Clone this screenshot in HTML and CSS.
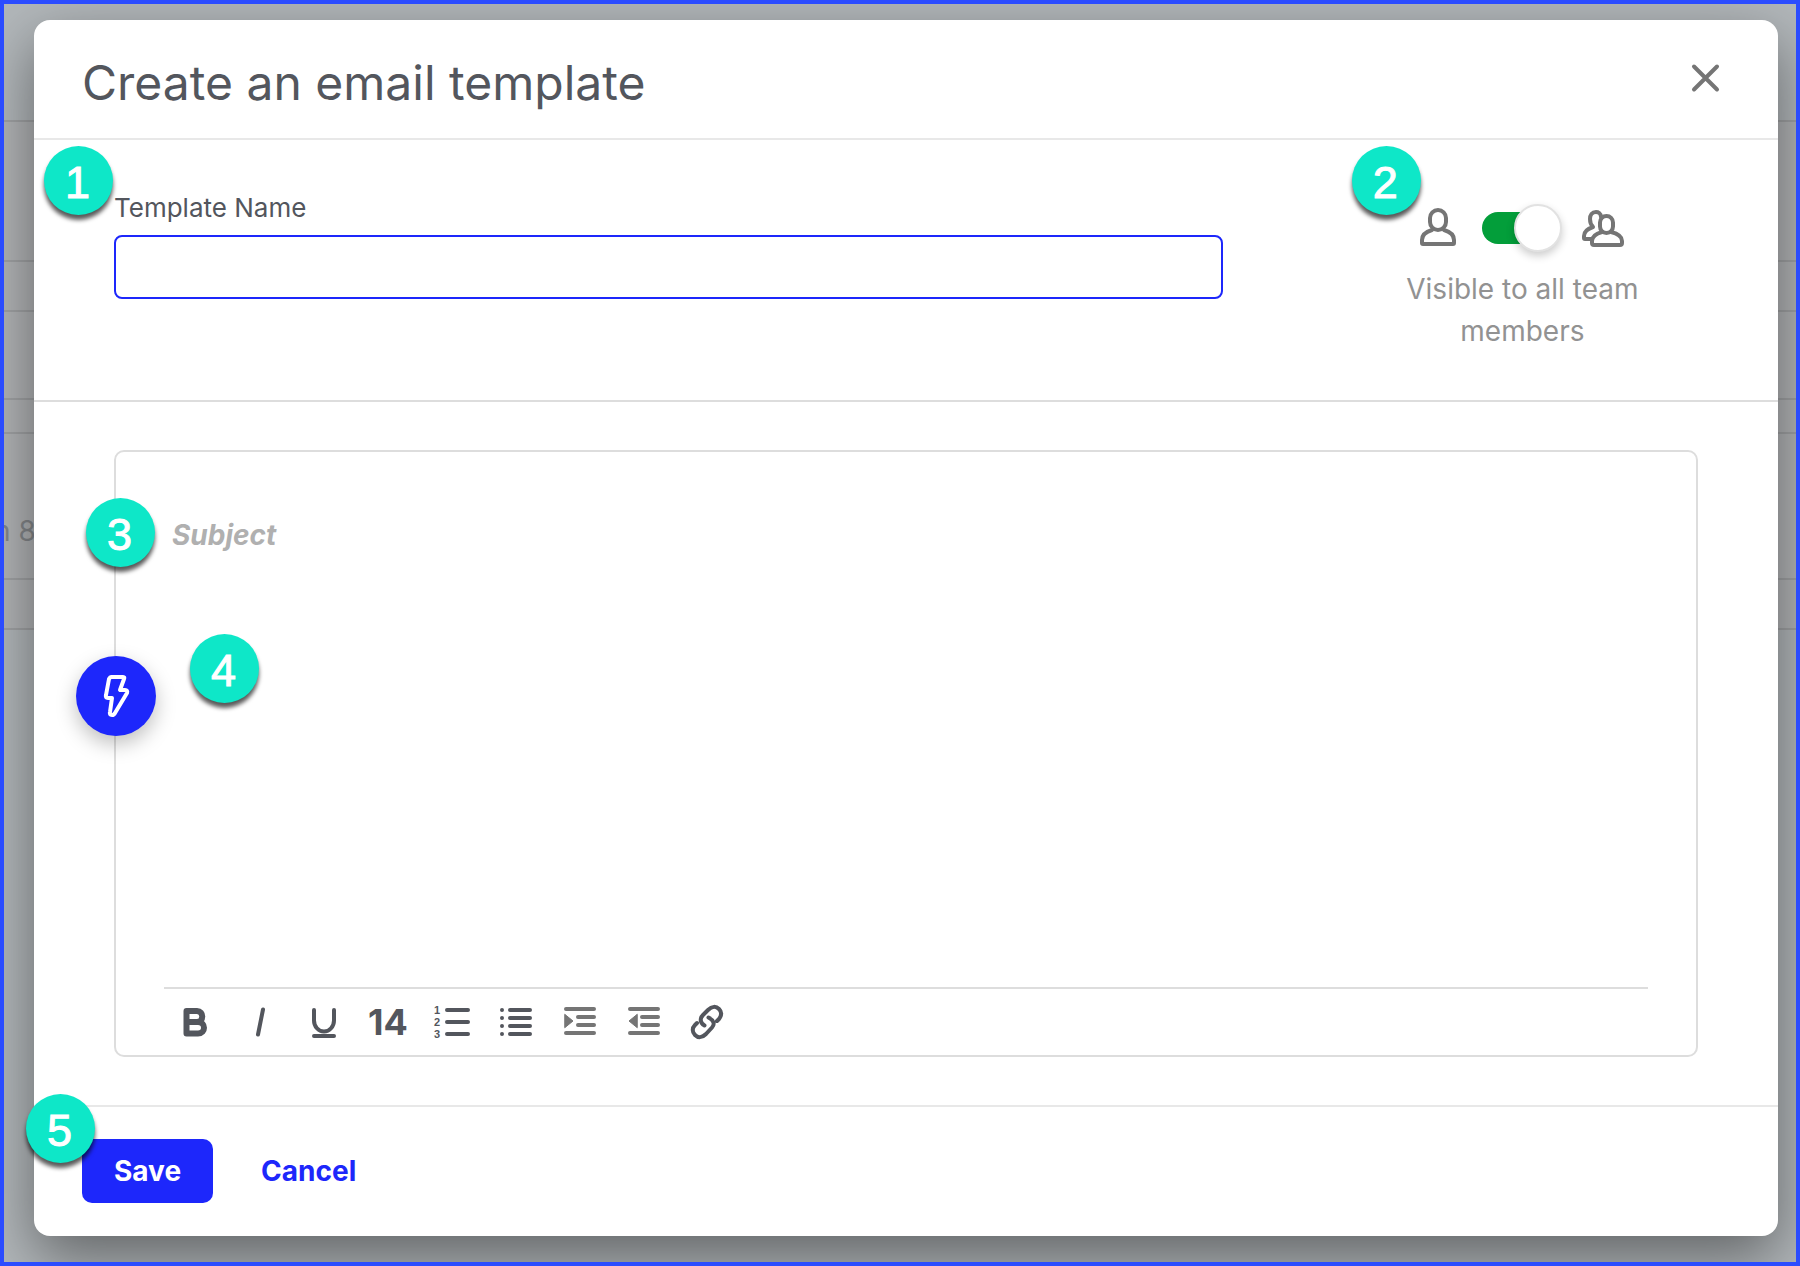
FILE: index.html
```
<!DOCTYPE html>
<html lang="en">
<head>
  <meta charset="UTF-8">
  <meta name="viewport" content="width=device-width, initial-scale=1.0">
  <title>Create an email template</title>
  <link rel="stylesheet" href="styles.css">
</head>
<body>
<div class="screen">

  <!-- Page behind the modal -->
  <div class="page">
    <div class="row row-top"></div>
    <div class="row row-filters"></div>
    <div class="row row-tabs"></div>
    <div class="row row-item"></div>
    <div class="row row-head"></div>
    <div class="row row-text">n 8</div>
    <div class="row row-last"></div>
  </div>

  <div class="overlay">
    <form class="modal" role="dialog" aria-labelledby="modal-title">
      <header class="modal-header">
        <h1 id="modal-title">Create an email template</h1>
        <button type="button" class="close" aria-label="Close">
          <svg width="32" height="32" viewBox="0 0 32 32"><path d="M4 4.500 27 27.500M27 4.500 4 27.500"/></svg>
        </button>
      </header>

      <!-- Name + visibility -->
      <section class="settings">
        <div class="name-field">
          <span class="badge badge-name">1</span>
          <label for="template-name">Template Name</label>
          <input type="text" id="template-name">
        </div>
        <div class="visibility">
          <span class="badge badge-visibility">2</span>
          <div class="toggle-row">
            <svg class="people" width="40" height="44" viewBox="0 0 40 44">
              <rect x="12" y="4" width="16" height="20" rx="8"/>
              <path d="M14 24C7 26 4 29 4 34v3q0 1 1 1h30q1 0 1-1v-3c0-5-3-8-10-10"/>
            </svg>
            <input type="checkbox" class="switch" id="visible" checked aria-label="Team visibility">
            <svg class="people" width="44" height="44" viewBox="0 0 44 44">
              <path d="M19 11C19 7 16 6 14 6c-4 0-6 3-6 7 0 4 1 6 3 8-6 2-9 5-9 9v2q0 1 1 1h7"/>
              <rect x="18" y="10" width="13" height="17" rx="6.500"/>
              <path d="M20 26c-7 2-10 5-10 9v2q0 2 2 2h26q2 0 2-2v-2c0-4-3-7-11-9"/>
            </svg>
          </div>
          <label for="visible">Visible to all team members</label>
        </div>
      </section>

      <!-- Editor -->
      <section class="content">
        <div class="editor">
          <div class="subject">
            <span class="badge badge-subject">3</span>
            <input type="text" placeholder="Subject" aria-label="Subject">
          </div>
          <div class="message">
            <span class="badge badge-message">4</span>
            <button type="button" class="shortcut" aria-label="Insert dynamic field">
              <svg width="28" height="46" viewBox="0 0 28 46"><path d="M9 4h12q2 0 1 2l-4 11h5q3 0 2 3L13 40q-1 2-3 2-3 0-2-3l2-14H6q-3 0-2-3L7 6q1-2 2-2Z"/></svg>
            </button>
            <textarea aria-label="Message"></textarea>
          </div>
          <div class="toolbar">
            <button type="button" aria-label="Bold">
              <svg width="32" height="36" viewBox="0 0 32 36"><path class="bold" d="M6.500 7H17c7 0 7 11 0 11H6.500V7v22.500H18c8 0 8-11.500 0-11.500"/></svg>
            </button>
            <button type="button" aria-label="Italic">
              <svg width="32" height="36" viewBox="0 0 32 36"><path d="M19 5.500 14 30.500"/></svg>
            </button>
            <button type="button" aria-label="Underline">
              <svg width="32" height="36" viewBox="0 0 32 36"><path d="M6 6v10.500a10 11 0 0 0 20 0V6M6 32h20"/></svg>
            </button>
            <button type="button" class="size" aria-label="Font size">14</button>
            <button type="button" aria-label="Numbered list">
              <svg width="40" height="36" viewBox="0 0 40 36">
                <path d="M15 6h21M15 18h21M15 30h21"/>
                <text x="2" y="10">1</text><text x="2" y="22">2</text><text x="2" y="34">3</text>
              </svg>
            </button>
            <button type="button" aria-label="Bulleted list">
              <svg width="36" height="36" viewBox="0 0 36 36"><path d="M12 6h20M12 14h20M12 22h20M12 30h20M4 6h0M4 14h0M4 22h0M4 30h0"/></svg>
            </button>
            <button type="button" class="muted" aria-label="Indent">
              <svg width="36" height="36" viewBox="0 0 36 36"><path d="M4 5h28M16 13h16M16 21h16M4 29h28"/><path class="arrow" d="M3 10.500l8 6.500-8 6.500Z"/></svg>
            </button>
            <button type="button" class="muted" aria-label="Outdent">
              <svg width="36" height="36" viewBox="0 0 36 36"><path d="M4 5h28M16 13h16M16 21h16M4 29h28"/><path class="arrow" d="M11 10.500l-8 6.500 8 6.500Z"/></svg>
            </button>
            <button type="button" aria-label="Link">
              <svg width="36" height="36" viewBox="0 0 36 36"><path d="M14.500 21.500C9.500 18.500 10 14 13 11l5-5c4-4 8-4 11-1s3 6 0 10l-2 2M18.500 13.500C24 16.500 25 20 22 23.500l-6 6.500c-4 4-8 4-11 1s-3-7 0-10l2-2"/></svg>
            </button>
          </div>
        </div>
      </section>

      <footer class="modal-footer">
        <span class="badge badge-save">5</span>
        <button type="submit" class="save">Save</button>
        <button type="button" class="cancel">Cancel</button>
      </footer>
    </form>
  </div>

</div>
</body>
</html>
```
FILE: styles.css
```
* {
  box-sizing: border-box;
}

body {
  margin: 0;
  font-family: Inter, sans-serif;
  color: #53565d;
}

button {
  padding: 0;
  border: 0;
  background: none;
  font: inherit;
  color: inherit;
  cursor: pointer;
}

svg {
  display: block;
  overflow: visible;
  fill: none;
  stroke: currentColor;
  stroke-width: 4;
  stroke-linecap: round;
  stroke-linejoin: round;
}

.screen {
  position: relative;
  display: flex;
  min-height: 100vh;
  border: 4px solid #2b4cff;
  background-color: #b2b7ba;
  overflow: hidden;
}

/* Page behind the modal */
.page {
  position: absolute;
  inset: 0;
}

.row {
  border-bottom: 2px solid #a0a2a4;
  background-color: #b2b4b6;
  font-size: 28px;
}

.row-top { height: 118px; background-color: #b2b7ba; }
.row-filters { height: 140px; }
.row-tabs { height: 50px; }
.row-item { height: 88px; }
.row-head { height: 34px; }
.row-text { height: 146px; line-height: 194px; text-indent: -10px; color: #84878a; }
.row-last { height: 50px; }

/* Modal */
.overlay {
  position: relative;
  display: flex;
  flex: 1;
  padding: 16px 18px 26px 30px;
}

.modal {
  display: flex;
  flex-direction: column;
  flex: 1;
  border-radius: 16px;
  background-color: #fff;
  box-shadow: 0 22px 60px rgba(0, 0, 0, 0.45);
}

.modal-header {
  display: flex;
  justify-content: space-between;
  align-items: flex-start;
  padding: 33px 56px 25px 48px;
  border-bottom: 2px solid #e8e8e8;
}

.modal-header h1 {
  margin: 0;
  font-size: 48px;
  font-weight: 400;
  line-height: 60px;
}

.close {
  margin-top: 9px;
  color: #757575;
}

.settings {
  display: grid;
  grid-template-columns: 7fr 3fr;
  padding: 48px 80px;
  border-bottom: 2px solid #ddd;
}

.name-field {
  position: relative;
}

.name-field label {
  display: block;
  margin-bottom: 7px;
  font-size: 26px;
  line-height: 40px;
}

.name-field input {
  display: block;
  width: 100%;
  height: 64px;
  padding: 0 16px;
  border: 2px solid #1d27fb;
  border-radius: 8px;
  outline: none;
  font: inherit;
  font-size: 28px;
}

.visibility {
  position: relative;
  padding: 0 40px 0 164px;
  font-size: 28px;
  line-height: 42px;
  text-align: center;
  color: #929292;
}

.visibility label {
  display: block;
}

.toggle-row {
  display: flex;
  justify-content: center;
  align-items: center;
  gap: 20px;
  height: 80px;
}

.people {
  color: #757575;
}

/* Green track with the knob on its right end */
.switch {
  position: relative;
  appearance: none;
  width: 76px;
  height: 32px;
  margin: 0 4px;
  border-radius: 16px;
  background-color: #039e3a;
}

.switch::before {
  content: "";
  position: absolute;
  top: -8px;
  right: -4px;
  width: 44px;
  height: 44px;
  border: 2px solid #e2e2e2;
  border-radius: 50%;
  background-color: #fff;
  box-shadow: 0 4px 8px rgba(0, 0, 0, 0.2);
}

/* Editor */
.content {
  display: flex;
  flex: 1;
  padding: 48px 80px;
}

.editor {
  display: flex;
  flex-direction: column;
  flex: 1;
  padding: 0 48px;
  border: 2px solid #ddd;
  border-radius: 10px;
}

.subject {
  position: relative;
  padding: 55px 8px 0;
}

.subject input {
  display: block;
  width: 100%;
  height: 56px;
  padding: 0;
  border: 0;
  outline: none;
  font: italic 700 28px Inter, sans-serif;
}

.subject input::placeholder {
  color: #b0b0b0;
}

.message {
  position: relative;
  display: flex;
  flex: 1;
  padding: 48px 8px 16px;
}

.message textarea {
  flex: 1;
  padding: 0;
  border: 0;
  outline: none;
  resize: none;
  font: 28px Inter, sans-serif;
}

.shortcut {
  position: absolute;
  top: 93px;
  left: -88px;
  display: flex;
  justify-content: center;
  align-items: center;
  width: 80px;
  height: 80px;
  border-radius: 50%;
  background-color: #1d27fb;
  color: #fff;
  box-shadow: 0 8px 20px rgba(0, 0, 0, 0.25);
}

.toolbar {
  display: flex;
  border-top: 2px solid #ddd;
}

.toolbar button {
  display: flex;
  justify-content: center;
  align-items: center;
  width: 64px;
  height: 66px;
}

.toolbar .size {
  font-size: 36px;
  font-weight: 700;
}

.toolbar .muted {
  color: #757575;
}

.toolbar text {
  fill: currentColor;
  stroke: none;
  font-family: "Liberation Sans", sans-serif;
  font-size: 11px;
  font-weight: 700;
}

.toolbar .bold {
  stroke-width: 6;
}

.toolbar .arrow {
  fill: currentColor;
  stroke-width: 1;
}

/* Footer */
.modal-footer {
  position: relative;
  display: flex;
  gap: 16px;
  padding: 32px 48px 33px;
  border-top: 2px solid #e8e8e8;
  font-size: 28px;
  font-weight: 700;
}

.modal-footer button {
  height: 64px;
  padding: 0 32px;
  border-radius: 10px;
}

.modal-footer .save {
  background-color: #1d27fb;
  color: #fff;
}

.modal-footer .cancel {
  color: #1d27fb;
}

/* Numbered badges */
.badge {
  position: absolute;
  z-index: 1;
  width: 69px;
  height: 69px;
  padding-right: 2px;
  border-radius: 50%;
  background-color: #0ee7c8;
  box-shadow: 0 5px 4px rgba(0, 0, 0, 0.65);
  color: #fff;
  font: 45px/74px "Liberation Sans", sans-serif;
  -webkit-text-stroke: 1px #fff;
  text-align: center;
}

.badge-name { top: -42px; left: -70px; }
.badge-visibility { top: -42px; left: 129px; }
.badge-subject { top: 46px; left: -78px; }
.badge-message { top: 71px; left: 26px; }
.badge-save { top: -13px; left: -8px; }
```
